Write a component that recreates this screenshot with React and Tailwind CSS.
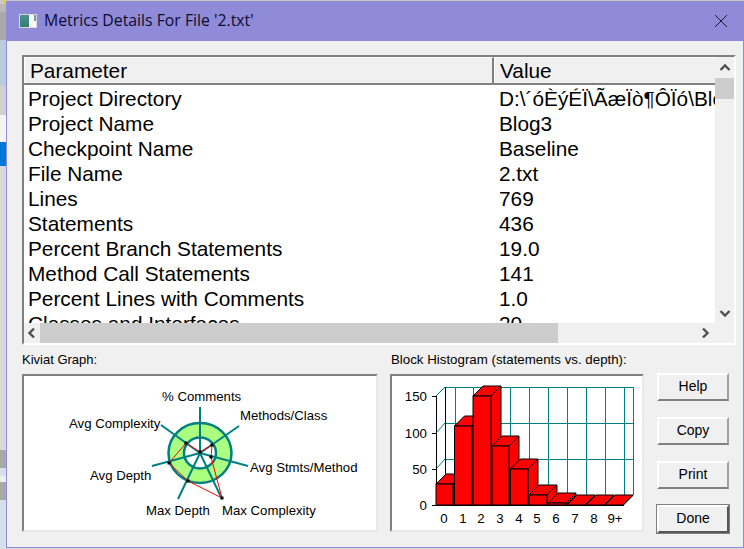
import React from "react";

const rows = [
  ["Project Directory", "D:\\´óÈýÉÏ\\ÃæÏò¶ÔÏó\\Blog3"],
  ["Project Name", "Blog3"],
  ["Checkpoint Name", "Baseline"],
  ["File Name", "2.txt"],
  ["Lines", "769"],
  ["Statements", "436"],
  ["Percent Branch Statements", "19.0"],
  ["Method Call Statements", "141"],
  ["Percent Lines with Comments", "1.0"],
  ["Classes and Interfaces", "20"],
];

// left edge of whatever window sits behind the dialog
const strip = [
  ["h-[4px]", "bg-[linear-gradient(90deg,#c9c9c9_60%,#e8d020_60%)]"],
  ["h-[8px]", "bg-[#b9b9b9]"],
  ["h-[28px]", "bg-[#a9a9a9]"],
  ["h-[45px]", "bg-[#b9cbdc]"],
  ["h-[30px]", "bg-[#d0d0d0]"],
  ["h-[27px]", "bg-[#f4f4f4]"],
  ["h-[24px]", "bg-[#0078d7]"],
  ["h-[284px]", "bg-[#d9d9d9]"],
  ["h-[18px]", "bg-[#a8a8a8]"],
  ["h-[8px]", "bg-[#d5e0ea]"],
  ["h-[6px]", "bg-[#eeeeee]"],
  ["h-[18px]", "bg-[#a8a8a8]"],
  ["h-[49px]", "bg-[#d5e0ea]"],
];

const center = [200, 453];
const spokes = [
  [200, 407],
  [239, 426],
  [248, 466],
  [222, 499],
  [178, 499],
  [152, 466],
  [161, 425],
];
const kiviatPoints = [
  [200, 452],
  [212, 445],
  [211, 457],
  [222, 498],
  [188, 481],
  [169, 463],
  [186, 443],
];
const kiviatLabels = [
  ["% Comments", 162, 401],
  ["Methods/Class", 240, 420],
  ["Avg Stmts/Method", 250, 472],
  ["Max Complexity", 222, 515],
  ["Max Depth", 146, 515],
  ["Avg Depth", 90, 480],
  ["Avg Complexity", 69, 428],
];

// svg is offset by the box origin (22,374) so the numbers above stay in page coordinates
function KiviatGraph() {
  return (
    <svg width="352" height="154" viewBox="24 376 352 154" className="block">
      <ellipse cx={center[0]} cy={center[1]} rx="31.5" ry="30" fill="#aaff80" stroke="#008080" strokeWidth="2.5" />
      <ellipse cx={center[0]} cy={center[1]} rx="16" ry="15.5" fill="#ffffff" stroke="#008080" strokeWidth="2.5" />
      {spokes.map(([x, y]) => (
        <line key={x + "-" + y} x1={center[0]} y1={center[1]} x2={x} y2={y} stroke="#008080" strokeWidth="2" />
      ))}
      <polygon points={kiviatPoints.map((p) => p.join(",")).join(" ")} fill="none" stroke="#ff0000" strokeWidth="1" />
      {kiviatPoints.map(([x, y]) => (
        <rect key={x + "-" + y} x={x - 1.5} y={y - 1.5} width="3" height="3" fill="#000000" />
      ))}
      {kiviatLabels.map(([t, x, y]) => (
        <text key={t} x={x} y={y} fontSize="13.2" fill="#000000" fontFamily="'Liberation Sans', sans-serif">
          {t}
        </text>
      ))}
    </svg>
  );
}

const backX = [445, 455, 473, 492, 510, 529, 548, 567, 586, 605, 624, 633];
const bars = [
  [436, 453, 484],
  [454.5, 472, 426],
  [473, 491, 396],
  [492, 509, 446],
  [510.5, 528, 469],
  [529, 547, 495],
  [548, 566, 503],
  [567, 585, 505],
  [586, 604, 505],
  [605, 623, 505],
];
const yTicks = [
  ["150", 396, 387],
  ["100", 433, 423],
  ["50", 469, 459],
  ["0", 505, 495],
];
const xLabels = ["0", "1", "2", "3", "4", "5", "6", "7", "8", "9+"];
const xLabelPos = [444, 463, 481, 500, 519, 537, 556, 575, 594, 615];

function Histogram() {
  return (
    <svg width="250" height="154" viewBox="392 376 250 154" className="block">
      {backX.map((x) => (
        <line key={x} x1={x + 0.5} y1="387" x2={x + 0.5} y2="495" stroke="#008080" strokeWidth="1" />
      ))}
      {yTicks.map(([t, y, by]) => (
        <g key={t}>
          <line x1="445" y1={by + 0.5} x2="633" y2={by + 0.5} stroke="#008080" />
          <line x1="436" y1={y} x2="445" y2={by} stroke="#008080" />
          <line x1="432" y1={y + 0.5} x2="436" y2={y + 0.5} stroke="#000000" />
          <text x="427" y={y + 5} textAnchor="end" fontSize="13.3" fontFamily="'Liberation Sans', sans-serif">
            {t}
          </text>
        </g>
      ))}
      <line x1="436.5" y1="396" x2="436.5" y2="505" stroke="#000000" />
      <line x1="445.5" y1="387" x2="445.5" y2="495" stroke="#000000" />
      <line x1="436" y1="505.5" x2="624" y2="505.5" stroke="#000000" />
      <line x1="633" y1="495.5" x2="623" y2="505.5" stroke="#000000" />
      {bars.map(([x1, x2, top]) => (
        <g key={x1} fill="#ff0000" stroke="#000000" strokeWidth="1">
          <polygon points={`${x1},${top} ${x1 + 10},${top - 10} ${x2 + 10},${top - 10} ${x2},${top}`} />
          <polygon points={`${x2},${top} ${x2 + 10},${top - 10} ${x2 + 10},495 ${x2},505`} />
          <rect x={x1} y={top} width={x2 - x1} height={505 - top} />
        </g>
      ))}
      {xLabels.map((t, i) => (
        <text key={t} x={xLabelPos[i]} y="523" textAnchor="middle" fontSize="13.3" fontFamily="'Liberation Sans', sans-serif">
          {t}
        </text>
      ))}
    </svg>
  );
}

function DialogButton({ label, isDefault }) {
  return (
    <button
      className={`w-[72px] h-[28px] pb-[1px] bg-[#f0f0f0] text-[14px] text-black border-2 border-t-white border-l-white ${
        isDefault ? "border-r-[#555555] border-b-[#555555] outline outline-1 outline-[#808080]" : "border-r-[#a0a0a0] border-b-[#808080]"
      }`}
    >
      {label}
    </button>
  );
}

function Chevron({ d }) {
  return (
    <svg width="12" height="12" viewBox="0 0 12 12" className="block">
      <path d={d} fill="none" stroke="#505050" strokeWidth="2.4" />
    </svg>
  );
}

export default function App() {
  return (
    <div className="w-[744px] h-[549px] overflow-hidden flex bg-[#d9d9d9] font-['Liberation_Sans',sans-serif]">
      <div className="w-[6px] shrink-0 flex flex-col">
        {strip.map(([h, bg], i) => (
          <div key={i} className={`${h} ${bg} shrink-0`} />
        ))}
      </div>

      <div className="flex-1 flex flex-col">
        <div className="h-[1px] bg-[#c8c8c8] shrink-0" />
        <div className="h-[547px] w-[738px] flex flex-col bg-[#f0f0f0] border-l border-r border-b border-[#8f8bd8]">
          {/* title bar */}
          <div className="h-[40px] shrink-0 bg-[#8f8bd8] flex items-center pl-[12px] pr-[15px]">
            <div className="w-[18px] h-[14px] flex border border-[#d8d8d8] bg-white mr-[7px]">
              <div className="w-[9px] bg-gradient-to-b from-[#4f8f8f] to-[#2f7f6f]" />
              <div className="w-[5px] bg-[#f8f8f8]" />
              <div className="w-[2px] h-[6px] bg-[#6fa0a0]" />
            </div>
            <span className="text-[15.8px] font-['Open_Sans',sans-serif] text-[#0c0c30]">Metrics Details For File '2.txt'</span>
            <svg width="14" height="14" viewBox="0 0 14 14" className="ml-auto">
              <path d="M1 1 L13 13 M13 1 L1 13" stroke="#1a1a2a" strokeWidth="1" />
            </svg>
          </div>

          <div className="flex-1 flex flex-col pl-[15px] pr-[7px] pt-[14px]">
            {/* table */}
            <div className="w-[714px] h-[290px] shrink-0 flex flex-col border-2 border-t-[#808080] border-l-[#808080] border-r-white border-b-white">
              <div className="flex-1 flex min-h-0">
                <div className="w-[691px] flex flex-col min-w-0">
                  <div className="h-[28px] shrink-0 flex bg-[#f0f0f0] border-b-2 border-[#808080] text-[20.8px] text-black">
                    <div className="w-[470px] pl-[5px] flex items-center border-r-2 border-[#808080] border-t border-l border-t-white border-l-white">Parameter</div>
                    <div className="flex-1 pl-[5px] flex items-center border-t border-l border-t-white border-l-white">Value</div>
                  </div>
                  <div className="flex-1 bg-white overflow-hidden pt-[1px]">
                    {rows.map(([name, value]) => (
                      <div key={name} className="h-[25px] flex items-center text-[20.8px] text-black whitespace-nowrap">
                        <div className="w-[475px] shrink-0 pl-[4px]">{name}</div>
                        <div className="w-[216px] overflow-hidden">{value}</div>
                      </div>
                    ))}
                  </div>
                </div>
                <div className="w-[19px] flex flex-col bg-[#f0f0f0]">
                  <div className="h-[21px] flex items-center justify-center shrink-0">
                    <Chevron d="M1.5 8 L6 3.5 L10.5 8" />
                  </div>
                  <div className="h-[21px] bg-[#cdcdcd] shrink-0" />
                  <div className="flex-1" />
                  <div className="h-[21px] flex items-center justify-center shrink-0">
                    <Chevron d="M1.5 4 L6 8.5 L10.5 4" />
                  </div>
                </div>
              </div>
              <div className="h-[20px] shrink-0 flex bg-[#f0f0f0]">
                <div className="w-[16px] flex items-center justify-center">
                  <Chevron d="M8 1.5 L3.5 6 L8 10.5" />
                </div>
                <div className="w-[518px] bg-[#cdcdcd]" />
                <div className="flex-1" />
                <div className="w-[21px] mr-[19px] flex items-center justify-center">
                  <Chevron d="M4 1.5 L8.5 6 L4 10.5" />
                </div>
              </div>
            </div>

            {/* graphs and buttons */}
            <div className="flex mt-[7px]">
              <div className="w-[356px] mr-[12px]">
                <div className="h-[22px] text-[13px] text-black leading-[15px]">Kiviat Graph:</div>
                <div className="w-[356px] h-[158px] bg-white border-2 border-t-[#808080] border-l-[#808080] border-r-[#e8e8e8] border-b-[#e8e8e8]">
                  <KiviatGraph />
                </div>
              </div>
              <div className="w-[254px] mr-[13px]">
                <div className="h-[22px] pl-[1px] text-[13.3px] text-black leading-[15px] whitespace-nowrap">Block Histogram (statements vs. depth):</div>
                <div className="w-[254px] h-[158px] bg-white border-2 border-t-[#808080] border-l-[#808080] border-r-[#e8e8e8] border-b-[#e8e8e8]">
                  <Histogram />
                </div>
              </div>
              <div className="flex flex-col gap-[16px] pt-[21px]">
                <DialogButton label="Help" />
                <DialogButton label="Copy" />
                <DialogButton label="Print" />
                <DialogButton label="Done" isDefault />
              </div>
            </div>
          </div>
        </div>
      </div>
    </div>
  );
}
